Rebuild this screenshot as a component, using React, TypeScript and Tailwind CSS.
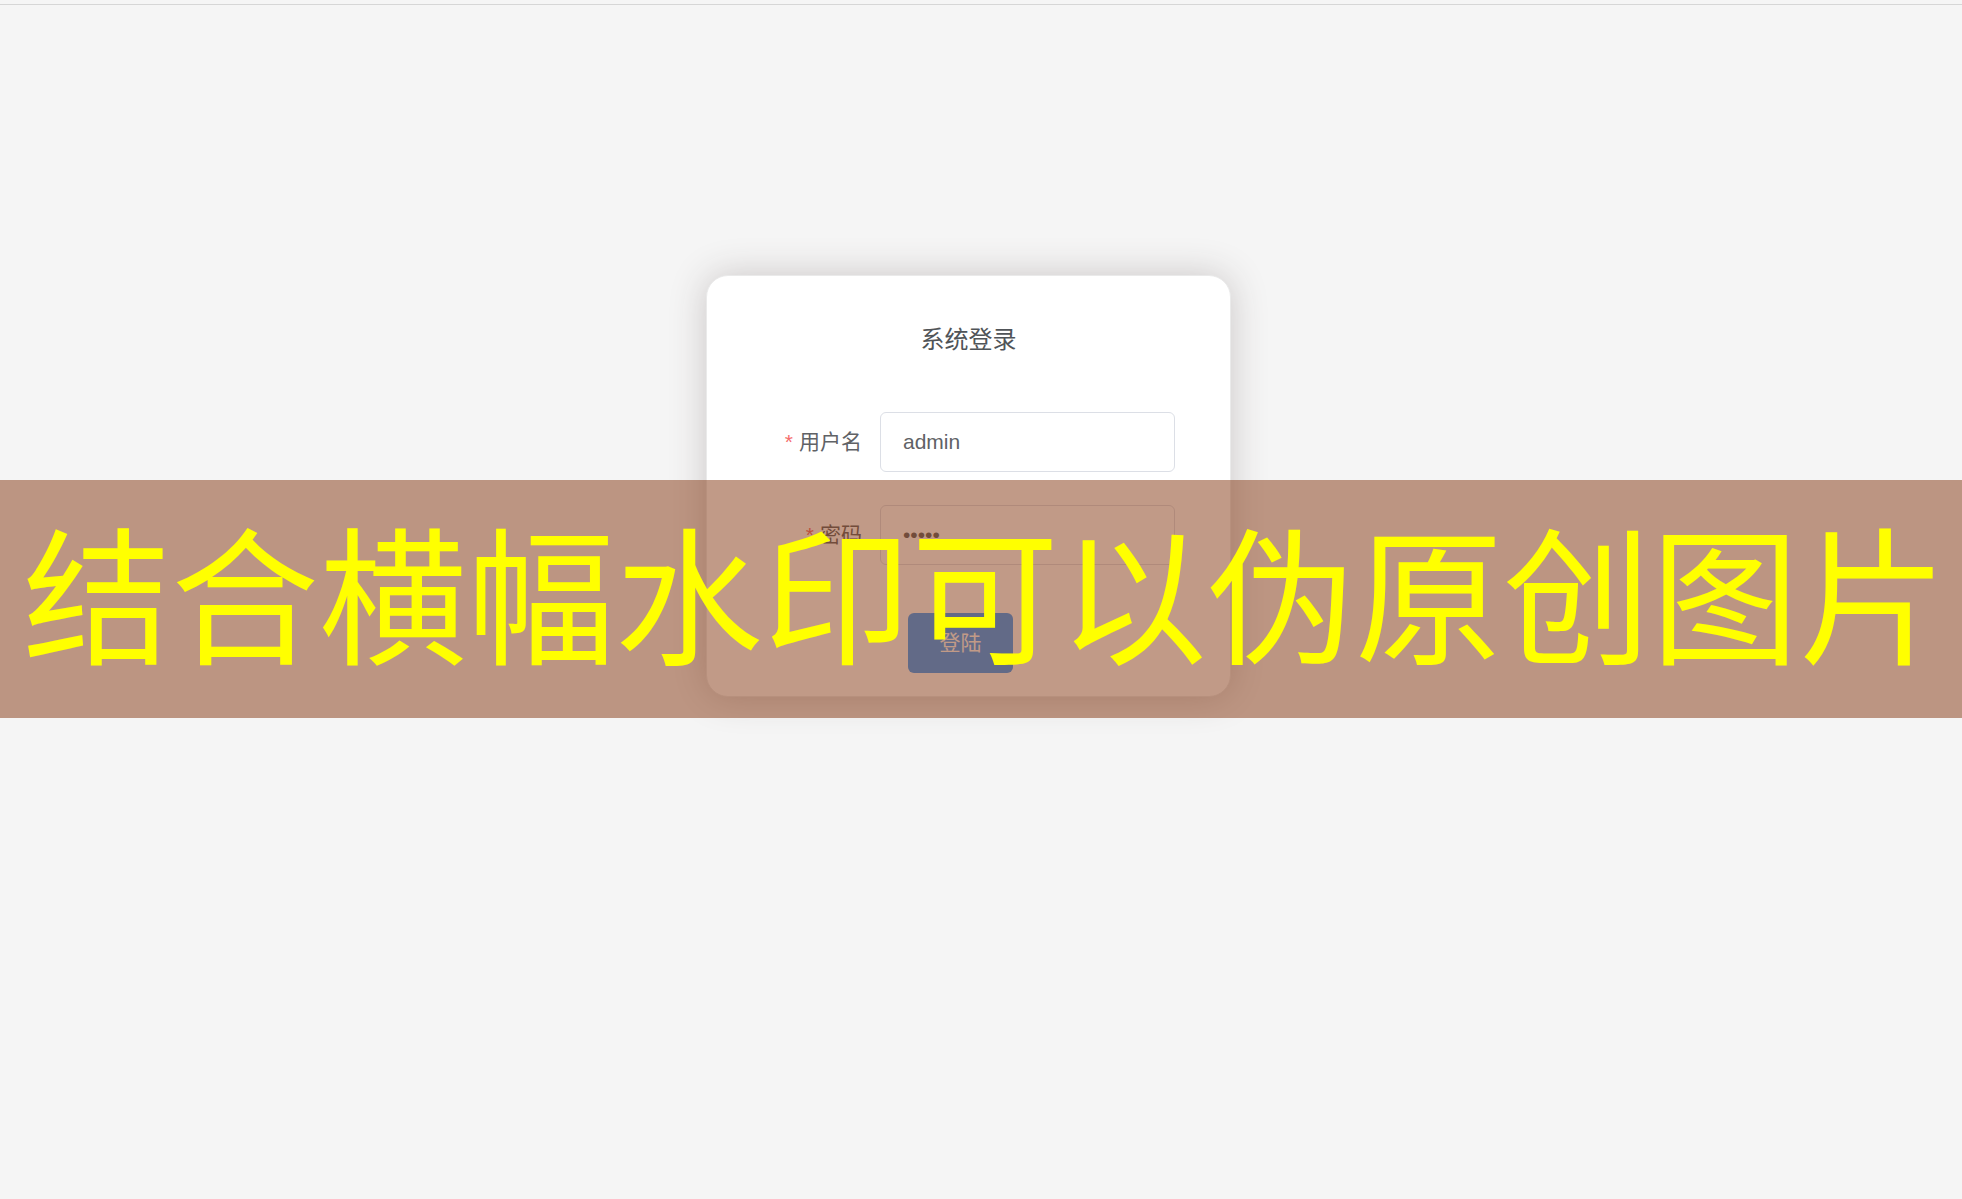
import React from "react";

export default function App() {
  return (
    <div className="relative w-full h-[1199px] overflow-hidden bg-[#f5f5f5] font-['Liberation_Sans','Noto_Sans_CJK_SC',sans-serif]">
      <div className="h-[4px]" />
      <div className="h-px bg-[#d6d6d6]" />
      <div className="ml-[706px] mt-[270px] w-[525px] rounded-[22px] border border-[#eaeaea] bg-white pt-[52px] px-[53px] pb-[23px] shadow-[0_0_37px_#cac6c6]">
        <h3 className="text-center text-[24px] leading-[24px] text-[#505458] mb-[60px]">系统登录</h3>
        <div className="flex items-center mb-[33px]">
          <label className="w-[120px] pr-[18px] text-right text-[21px] leading-[60px] text-[#606266]">
            <span className="text-[#f56c6c] mr-[6px]">*</span>用户名
          </label>
          <input
            readOnly
            defaultValue="admin"
            className="w-[295px] h-[60px] rounded-[6px] border border-[#dcdfe6] bg-white px-[22px] text-[21px] text-[#606266] outline-none"
          />
        </div>
        <div className="flex items-center mb-[15px]">
          <label className="w-[120px] pr-[18px] text-right text-[21px] leading-[60px] text-[#606266]">
            <span className="text-[#f56c6c] mr-[6px]">*</span>密码
          </label>
          <input
            readOnly
            type="password"
            defaultValue="admin"
            className="w-[295px] h-[60px] rounded-[6px] border border-[#dcdfe6] bg-white px-[22px] text-[21px] text-[#606266] outline-none"
          />
        </div>
        <div className="flex mt-[48px]">
          <button className="ml-[148px] w-[105px] h-[60px] rounded-[6px] bg-[#409eff] text-white text-[21px]">
            登陆
          </button>
        </div>
      </div>

      <div className="absolute left-0 right-0 top-[480px] h-[238px] bg-[rgba(131,53,15,0.5)] flex items-center justify-center pb-[20px] pl-[8px]">
        <span className="whitespace-nowrap text-[148px] leading-none text-[#ffff00] font-['Noto_Sans_CJK_SC',sans-serif]">
          结合横幅水印可以伪原创图片
        </span>
      </div>
    </div>
  );
}
